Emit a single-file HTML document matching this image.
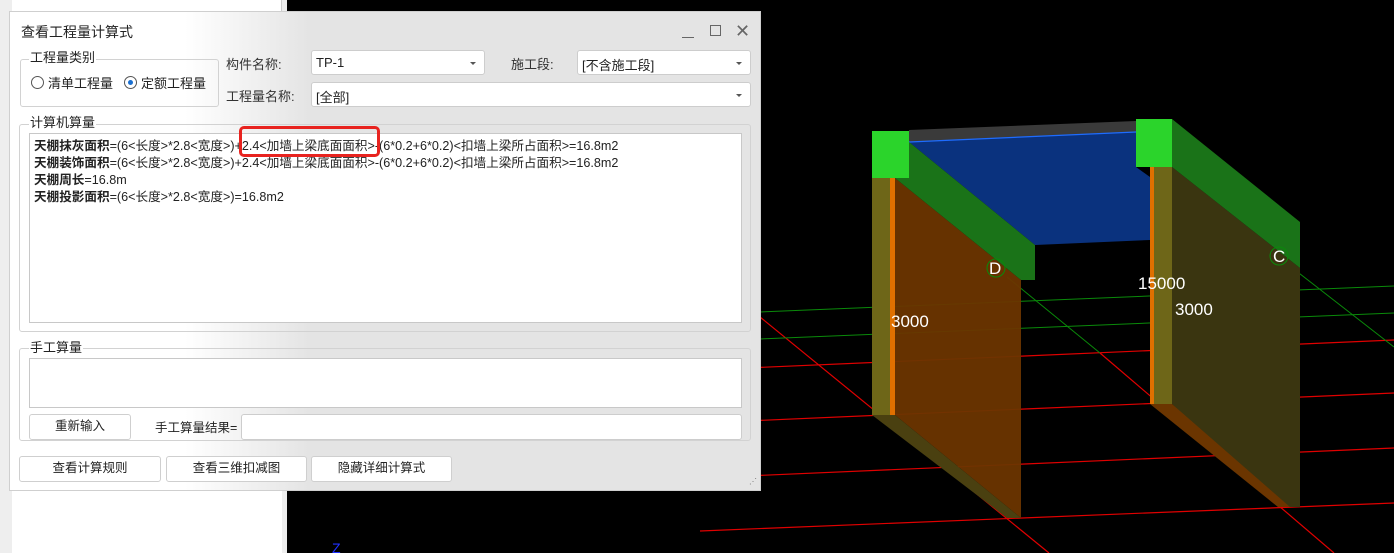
<!DOCTYPE html>
<html><head><meta charset="utf-8"><style>
*{margin:0;padding:0;box-sizing:border-box}
body{width:1394px;height:553px;position:relative;overflow:hidden;background:#000;font-family:"Liberation Sans","Microsoft YaHei","Noto Sans CJK SC",sans-serif;font-size:13px;color:#222}
.a{position:absolute}
#lp{left:0;top:0;width:287px;height:553px;background:#eee}
#lp .w{left:12px;top:0;width:270px;height:553px;background:#fff;border-right:1px solid #ccc}
#lp .w2{left:36px;top:480px;width:246px;height:73px;background:#fff}
#dlg{left:9px;top:11px;width:752px;height:480px;border:1px solid #cfcfcf;background:linear-gradient(to right,#fff 175px,#e4e4e4 300px)}
.grp{border:1px solid #d2d2d2;border-radius:3px;background:transparent}
.glab{background:inherit;padding:0 1px;line-height:14px}
.box{background:#fff;border:1px solid #cdcdcd;border-radius:3px}
.cb::after{content:"";position:absolute;right:8px;top:11px;border-left:3px solid transparent;border-right:3px solid transparent;border-top:3px solid #555}
.cb span{position:absolute;left:4px;top:4px}
.btn{background:#fff;border:1px solid #cfcfcf;border-radius:3px;text-align:center;line-height:23px;font-size:12.5px}
.ta{background:#fff;border:1px solid #c8c8c8}
.ln{position:absolute;left:4px;white-space:nowrap;font-size:12.6px;line-height:17px}
b{font-weight:bold}
.lbl{white-space:nowrap}
</style></head><body>
<div id="lp" class="a"><div class="a w"></div><div class="a w2"></div></div>

<svg class="a" style="left:287px;top:0" width="1107" height="553" viewBox="287 0 1107 553">
<g stroke="#e00000" stroke-width="1.2">
<line x1="700" y1="370" x2="1394" y2="340"/>
<line x1="700" y1="423" x2="1394" y2="393"/>
<line x1="700" y1="478" x2="1394" y2="448"/>
<line x1="700" y1="531" x2="1394" y2="503"/>
<line x1="760" y1="317" x2="1049" y2="553"/>
<line x1="1100" y1="353" x2="1334" y2="553"/>
</g>
<g stroke="#0a8a0a" stroke-width="1">
<line x1="760" y1="312" x2="1394" y2="286"/>
<line x1="760" y1="339" x2="1394" y2="313"/>
<line x1="1007" y1="277" x2="1100" y2="353"/>
<line x1="1286" y1="263" x2="1394" y2="347"/>
</g>
<polygon points="895,178 1021,280 1021,518 895,415" fill="#6b3500" opacity="0.95"/>
<polygon points="872,415 895,415 1021,518 1007,518" fill="#4a4010"/>
<rect x="872" y="178" width="18" height="237" fill="#6e6618"/>
<rect x="890" y="178" width="5" height="237" fill="#e07000"/>
<polygon points="1172,167 1300,268 1300,507 1278,507 1172,404" fill="#3a3510"/>
<polygon points="1150,404 1172,404 1290,507 1278,507" fill="#6b3500"/>
<rect x="1150" y="167" width="22" height="237" fill="#6e6618"/>
<rect x="1150" y="167" width="4" height="237" fill="#e07000"/>
<polygon points="909,130 1136,121 1136,132 909,142" fill="#3a3a3a"/>
<polygon points="909,142 1136,132 1136,167 1150,177 1150,240 1035,245" fill="#0a327e"/>
<line x1="909" y1="142" x2="1136" y2="132" stroke="#1e6cff" stroke-width="1.2"/>
<polygon points="909,142 1035,245 1035,280 1021,280 895,178 909,178" fill="#1a7318"/>
<polygon points="1172,119 1300,222 1300,268 1172,167" fill="#1a7318"/>
<rect x="872" y="131" width="37" height="47" fill="#2bd42b"/>
<rect x="1136" y="119" width="36" height="48" fill="#2bd42b"/>
<circle cx="996" cy="268" r="9" fill="none" stroke="#0a8a0a"/>
<circle cx="1279" cy="256" r="9" fill="none" stroke="#0a8a0a"/>
<g fill="#fff" font-size="17" font-family="Liberation Sans,sans-serif">
<text x="891" y="327">3000</text>
<text x="989" y="274">D</text>
<text x="1273" y="262">C</text>
<text x="1138" y="289">15000</text>
<text x="1175" y="315">3000</text>
</g>
<text x="332" y="553" fill="#2030ff" font-size="14" font-family="Liberation Sans,sans-serif">Z</text>
</svg>

<div id="dlg" class="a">
<div class="a" style="left:11px;top:10px;font-size:14px">查看工程量计算式</div>
<div class="a" style="left:672px;top:25px;width:12px;border-top:1px solid #666"></div>
<div class="a" style="left:700px;top:13px;width:11px;height:11px;border:1px solid #666"></div>
<div class="a" style="left:725px;top:9px;font-size:18px;color:#666;line-height:20px">✕</div>

<div class="a grp" style="left:10px;top:47px;width:199px;height:48px"></div>
<div class="a glab" style="left:19px;top:39px;background:#fff">工程量类别</div>
<div class="a" style="left:21px;top:64px;width:13px;height:13px;border:1px solid #555;border-radius:50%;background:#fff"></div>
<div class="a lbl" style="left:38px;top:61px">清单工程量</div>
<div class="a" style="left:114px;top:64px;width:13px;height:13px;border:1px solid #555;border-radius:50%;background:#fff"></div>
<div class="a" style="left:118px;top:68px;width:5px;height:5px;border-radius:50%;background:#1a6fd0"></div>
<div class="a lbl" style="left:131px;top:61px">定额工程量</div>

<div class="a lbl" style="left:216px;top:42px;color:#333">构件名称:</div>
<div class="a box cb" style="left:301px;top:38px;width:174px;height:25px"><span>TP-1</span></div>
<div class="a lbl" style="left:501px;top:42px;color:#333">施工段:</div>
<div class="a box cb" style="left:567px;top:38px;width:174px;height:25px"><span>[不含施工段]</span></div>
<div class="a lbl" style="left:216px;top:74px;color:#333">工程量名称:</div>
<div class="a box cb" style="left:301px;top:70px;width:440px;height:25px"><span>[全部]</span></div>

<div class="a grp" style="left:9px;top:112px;width:732px;height:208px"></div>
<div class="a glab" style="left:19px;top:104px;background:#fff">计算机算量</div>
<div class="a ta" style="left:19px;top:121px;width:713px;height:190px">
<div class="ln" style="top:4px"><b>天棚抹灰面积</b>=(6&lt;长度&gt;*2.8&lt;宽度&gt;)+2.4&lt;加墙上梁底面面积&gt;-(6*0.2+6*0.2)&lt;扣墙上梁所占面积&gt;=16.8m2</div>
<div class="ln" style="top:21px"><b>天棚装饰面积</b>=(6&lt;长度&gt;*2.8&lt;宽度&gt;)+2.4&lt;加墙上梁底面面积&gt;-(6*0.2+6*0.2)&lt;扣墙上梁所占面积&gt;=16.8m2</div>
<div class="ln" style="top:38px"><b>天棚周长</b>=16.8m</div>
<div class="ln" style="top:55px"><b>天棚投影面积</b>=(6&lt;长度&gt;*2.8&lt;宽度&gt;)=16.8m2</div>
</div>
<div class="a" style="left:229px;top:114px;width:141px;height:31px;border:3px solid #e8231f;border-radius:5px"></div>

<div class="a grp" style="left:9px;top:336px;width:732px;height:93px"></div>
<div class="a glab" style="left:19px;top:329px;background:#fff">手工算量</div>
<div class="a ta" style="left:19px;top:346px;width:713px;height:50px"></div>
<div class="a btn" style="left:19px;top:402px;width:102px;height:26px">重新输入</div>
<div class="a lbl" style="left:145px;top:405px;font-size:12.5px">手工算量结果=</div>
<div class="a box" style="left:231px;top:402px;width:501px;height:26px"></div>

<div class="a btn" style="left:9px;top:444px;width:142px;height:26px">查看计算规则</div>
<div class="a btn" style="left:156px;top:444px;width:141px;height:26px">查看三维扣减图</div>
<div class="a btn" style="left:301px;top:444px;width:141px;height:26px">隐藏详细计算式</div>
<div class="a" style="left:739px;top:466px;font-size:8px;color:#777;line-height:8px">⋰</div>
</div>
</body></html>
